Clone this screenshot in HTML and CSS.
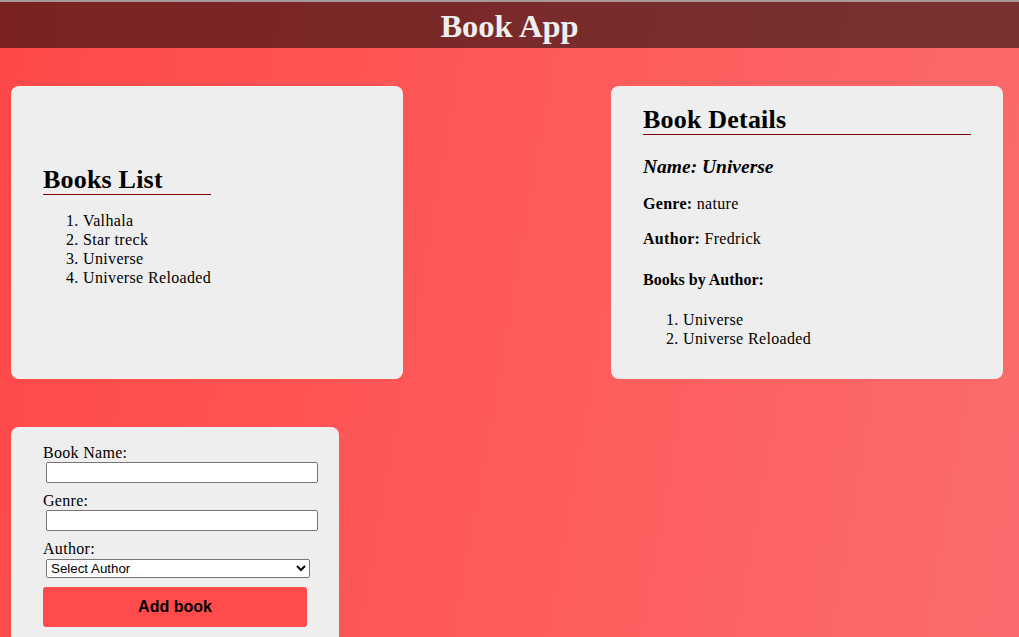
FILE: index.html
```html
<!DOCTYPE html>
<html lang="en">
<head>
<meta charset="utf-8">
<title>Book App</title>
<link rel="stylesheet" href="styles.css">
</head>
<body>
<header class="app-header">
  <h1 class="app-title">Book App</h1>
</header>
<main class="main">
  <section class="top-row">
    <div class="card card-list">
      <div class="list-inner">
        <h2 class="card-title">Books List</h2>
        <ol class="book-list">
          <li>Valhala</li>
          <li>Star treck</li>
          <li>Universe</li>
          <li>Universe Reloaded</li>
        </ol>
      </div>
    </div>
    <div class="card card-details">
      <h2 class="card-title">Book Details</h2>
      <h3 class="detail-name">Name: Universe</h3>
      <p class="detail-row"><strong>Genre:</strong> nature</p>
      <p class="detail-row"><strong>Author:</strong> Fredrick</p>
      <h4 class="detail-sub">Books by Author:</h4>
      <ol class="book-list author-list">
        <li>Universe</li>
        <li>Universe Reloaded</li>
      </ol>
    </div>
  </section>
  <form class="card card-form">
    <div class="field">
      <label class="field-label" for="bname">Book Name:</label>
      <input class="field-input" id="bname" type="text">
    </div>
    <div class="field">
      <label class="field-label" for="genre">Genre:</label>
      <input class="field-input" id="genre" type="text">
    </div>
    <div class="field field-author">
      <label class="field-label" for="author">Author:</label>
      <select class="field-select" id="author">
        <option>Select Author</option>
      </select>
    </div>
    <button class="btn-add" type="button">Add book</button>
  </form>
</main>
</body>
</html>
```

FILE: styles.css
```css
html {
  background: linear-gradient(100deg, #ff4848 0%, #fc6c6c 100%);
  min-height: 100%;
}

body {
  margin: 0;
  font-family: "Liberation Serif", "Times New Roman", serif;
  color: #000;
  border-top: 2px solid #a89898;
}

.app-header {
  background: rgba(0, 0, 0, 0.52);
  height: 46px;
}

.app-title {
  margin: 0;
  text-align: center;
  font-size: 32.5px;
  font-weight: bold;
  line-height: 48px;
  color: #eeeeee;
}

.main {
  padding: 38px 16px 0 11px;
}

.top-row {
  display: grid;
  grid-template-columns: 392px 392px;
  justify-content: space-between;
  margin-bottom: 48px;
}

.card {
  background: #eeeeee;
  border-radius: 8px;
  box-sizing: border-box;
}

.card-list {
  height: 293px;
  display: flex;
  align-items: center;
  padding: 0 32px 16px;
}

.card-details {
  height: 293px;
  padding: 0 32px;
}

.card-title {
  font-size: 26px;
  line-height: 28px;
  font-weight: bold;
  letter-spacing: 0.2px;
  margin: 20px 0 16px;
  border-bottom: 1px solid #800000;
}

.card-details .card-title {
  margin-bottom: 0;
}

.book-list {
  margin: 16px 0;
  padding-left: 40px;
  font-size: 16px;
  line-height: 19px;
  letter-spacing: 0.35px;
}

.detail-name {
  font-size: 19.5px;
  line-height: 22px;
  font-style: italic;
  font-weight: bold;
  margin: 21px 0 16px;
}

.detail-row {
  font-size: 16px;
  line-height: 19px;
  letter-spacing: 0.3px;
  margin: 16px 0;
}

.detail-sub {
  font-size: 16px;
  line-height: 19px;
  font-weight: bold;
  margin: 22px 0 21px;
}

.author-list {
  margin-top: 21px;
}

.card-form {
  width: 328px;
  padding: 16px 32px 16px;
  border-radius: 8px 8px 0 0;
}

.field {
  margin-bottom: 8px;
}

.field-label {
  display: block;
  font-size: 16px;
  line-height: 19px;
  letter-spacing: 0.3px;
}

.field-input {
  display: block;
  box-sizing: border-box;
  width: 272px;
  height: 21px;
  margin: 0 0 0 3px;
  font-family: "Liberation Sans", Arial, sans-serif;
  font-size: 13.33px;
}

.field-author {
  margin-bottom: 9px;
}

.field-select {
  display: block;
  box-sizing: border-box;
  width: 264px;
  height: 19px;
  margin: 1px 0 0 3px;
  font-family: "Liberation Sans", Arial, sans-serif;
  font-size: 13.33px;
}

.btn-add {
  display: block;
  width: 264px;
  height: 40px;
  border: none;
  border-radius: 3px;
  background: #ff4b4b;
  color: #000;
  font-family: "Liberation Sans", Arial, sans-serif;
  font-size: 16px;
  font-weight: bold;
  cursor: pointer;
}
```
